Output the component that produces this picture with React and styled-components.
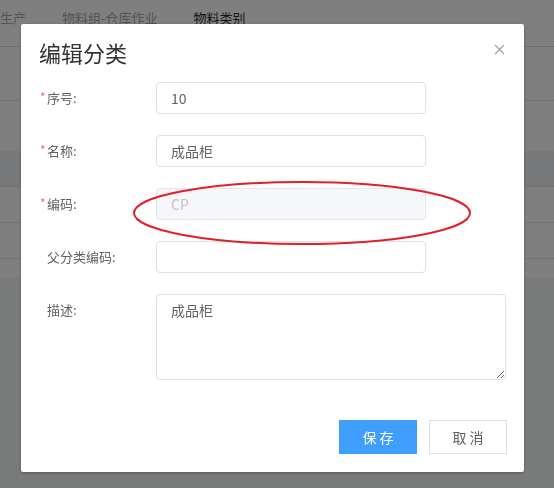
import React from "react";
import styled, { createGlobalStyle } from "styled-components";

const Global = createGlobalStyle`
  html, body { margin: 0; padding: 0; }
  body {
    width: 554px; height: 488px; overflow: hidden;
    font-family: "Noto Sans CJK SC", "Noto Sans", sans-serif;
    background: #fff;
  }
  * { box-sizing: border-box; }
`;

const Page = styled.div`
  width: 554px;
  height: 488px;
  display: flex;
  flex-direction: column;
  background: #f3f6f5;
`;

const TabsBar = styled.div`
  height: 47px;
  display: flex;
  align-items: flex-start;
  background: #fff;
  border-bottom: 1px solid #dcdfe4;
`;

const Tab = styled.div`
  padding: 8px 18px 0 0;
  margin-right: 18px;
  font-size: 13px;
  line-height: 20px;
  color: ${(p) => (p.$active ? "#2a2a2a" : "#a9a9a9")};
`;

const TableRow = styled.div`
  height: ${(p) => p.$h}px;
  background: ${(p) => p.$bg || "#fff"};
  border-bottom: ${(p) => (p.$line ? "1px solid #e4e6ea" : "none")};
`;

const Overlay = styled.div`
  position: fixed;
  inset: 0;
  background: rgba(0, 0, 0, 0.5);
  display: flex;
  align-items: flex-start;
`;

const Dialog = styled.div`
  position: relative;
  margin: 24px 0 0 21px;
  width: 503px;
  height: 448px;
  background: #fff;
  border-radius: 2px;
  box-shadow: 0 1px 3px rgba(0, 0, 0, 0.3);
  display: flex;
  flex-direction: column;
`;

const Header = styled.div`
  display: flex;
  align-items: center;
  justify-content: space-between;
  padding: 13px 19px 0 18px;
  height: 43px;
`;

const Title = styled.div`
  font-size: 22px;
  line-height: 30px;
  color: #333;
`;

const CloseBtn = styled.button`
  border: 0;
  background: none;
  padding: 0;
  width: 12px;
  height: 12px;
  display: flex;
  align-items: center;
  justify-content: center;
  margin-top: -6px;
  cursor: pointer;
`;

const Form = styled.div`
  display: flex;
  flex-direction: column;
  gap: 21px;
  padding: 15px 18px 0 18px;
`;

const Row = styled.div`
  display: flex;
  align-items: ${(p) => (p.$top ? "flex-start" : "center")};
`;

const Label = styled.div`
  width: 117px;
  display: flex;
  align-items: center;
  font-size: 13px;
  color: #606266;
  line-height: 32px;
  height: 32px;
`;

const Marker = styled.span`
  width: 8px;
  padding-left: 1px;
  color: #f56c6c;
  font-size: 12px;
  line-height: 1;
  align-self: center;
  margin-top: -3px;
`;

const Input = styled.input`
  width: 270px;
  height: 32px;
  border: 1px solid ${(p) => (p.disabled ? "#e4e7ed" : "#dcdfe6")};
  border-radius: 4px;
  padding: 0 14px;
  font-family: inherit;
  font-size: 14px;
  color: #606266;
  background: ${(p) => (p.disabled ? "#f5f7fa" : "#fff")};
  outline: none;
  &:disabled { color: #c0c4cc; -webkit-text-fill-color: #c0c4cc; }
`;

const TextArea = styled.textarea`
  width: 350px;
  height: 86px;
  border: 1px solid #dcdfe6;
  border-radius: 4px;
  padding: 4px 14px;
  font-family: inherit;
  font-size: 14px;
  line-height: 22px;
  color: #606266;
  outline: none;
  resize: vertical;
`;

const Footer = styled.div`
  margin-top: auto;
  display: flex;
  justify-content: flex-end;
  gap: 12px;
  padding: 0 17px 18px 0;
`;

const Button = styled.button`
  width: 78px;
  height: 34px;
  border: 1px solid ${(p) => (p.$primary ? "#409eff" : "#dcdfe6")};
  background: ${(p) => (p.$primary ? "#409eff" : "#fff")};
  color: ${(p) => (p.$primary ? "#fff" : "#606266")};
  font-family: inherit;
  font-size: 14px;
  letter-spacing: 3px;
  text-indent: 3px;
  border-radius: 0;
  padding: 0;
  cursor: pointer;
`;

const Mark = styled.svg`
  position: absolute;
  left: 111px;
  top: 155px;
  pointer-events: none;
`;

const rows = [
  { label: "序号:", req: true, value: "10" },
  { label: "名称:", req: true, value: "成品柜" },
  { label: "编码:", req: true, value: "CP", disabled: true },
  { label: "父分类编码:", req: false, value: "" },
];

export default function App() {
  return (
    <>
      <Global />
      <Page>
        <TabsBar>
          <Tab>生产</Tab>
          <Tab>物料组-仓库作业</Tab>
          <Tab $active>物料类别</Tab>
        </TabsBar>
        <TableRow $h={54} $line />
        <TableRow $h={50} />
        <TableRow $h={36} $bg="#eef0f4" $line />
        <TableRow $h={36} $line />
        <TableRow $h={36} $line />
        <TableRow $h={19} />
      </Page>
      <Overlay>
        <Dialog>
          <Header>
            <Title>编辑分类</Title>
            <CloseBtn aria-label="关闭">
              <svg width="11" height="11" viewBox="0 0 11 11">
                <path d="M1 1L10 10M10 1L1 10" stroke="#a0a3a8" strokeWidth="1.2" />
              </svg>
            </CloseBtn>
          </Header>
          <Form>
            {rows.map((r) => (
              <Row key={r.label}>
                <Label>
                  <Marker>{r.req ? "*" : ""}</Marker>
                  {r.label}
                </Label>
                <Input defaultValue={r.value} disabled={r.disabled} />
              </Row>
            ))}
            <Row $top>
              <Label>
                <Marker />
                描述:
              </Label>
              <TextArea defaultValue="成品柜" />
            </Row>
          </Form>
          <Footer>
            <Button $primary>保存</Button>
            <Button>取消</Button>
          </Footer>
          <Mark width="342" height="68" viewBox="0 0 342 68">
            <ellipse cx="170" cy="34" rx="168" ry="31" fill="none" stroke="#e3202a" strokeWidth="2" />
          </Mark>
        </Dialog>
      </Overlay>
    </>
  );
}
